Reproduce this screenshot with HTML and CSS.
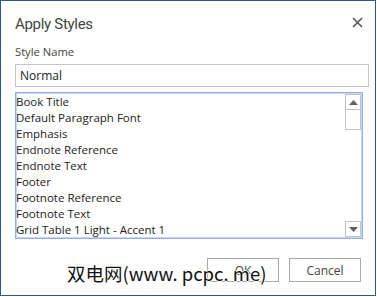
FILE: index.html
```html
<!DOCTYPE html>
<html lang="en">
<head>
  <meta charset="UTF-8">
  <title>Apply Styles</title>
  <link rel="stylesheet" href="styles.css">
</head>
<body>
  <div class="dialog">
    <div class="header">
      <h1>Apply Styles</h1>
      <button class="close" aria-label="Close">
        <svg width="11" height="11" viewBox="0 0 11 11"><path d="M1 1L10 10M10 1L1 10" stroke="#555" stroke-width="1.6"/></svg>
      </button>
    </div>

    <label for="styleName">Style Name</label>
    <input type="text" id="styleName" value="Normal">

    <div class="list">
      <ul class="items">
        <li>Book Title</li>
        <li>Default Paragraph Font</li>
        <li>Emphasis</li>
        <li>Endnote Reference</li>
        <li>Endnote Text</li>
        <li>Footer</li>
        <li>Footnote Reference</li>
        <li>Footnote Text</li>
        <li>Grid Table 1 Light - Accent 1</li>
      </ul>
      <div class="scrollbar">
        <div class="arrow up"><svg width="9" height="5" viewBox="0 0 9 5"><path d="M4.5 0L9 5H0Z" fill="#606060"/></svg></div>
        <div class="thumb"></div>
        <div class="track"></div>
        <div class="arrow down"><svg width="9" height="5" viewBox="0 0 9 5"><path d="M0 0H9L4.5 5Z" fill="#606060"/></svg></div>
      </div>
    </div>

    <div class="actions">
      <button class="btn">OK</button>
      <button class="btn">Cancel</button>
      <span class="watermark">双电网(www. pcpc. me)</span>
    </div>
  </div>
</body>
</html>
```

FILE: styles.css
```css
* {
  box-sizing: border-box;
}
body {
  margin: 0;
  background-color: white;
  font-family: 'Open Sans', 'Noto Sans', sans-serif;
  color: #444;
}
.dialog {
  width: 376px;
  height: 296px;
  border: 1px solid #2b579a;
  padding: 0 14px 0 14px;
  position: relative;
}
.header {
  display: flex;
  justify-content: space-between;
  align-items: center;
  height: 43px;
}
h1 {
  margin: 0;
  font-family: 'Roboto', 'Open Sans', sans-serif;
  font-size: 15px;
  font-weight: 400;
  letter-spacing: -0.3px;
  color: #444;
  padding-top: 2px;
}
.close {
  border: none;
  background: none;
  padding: 0;
  margin-right: -2px;
  display: flex;
}
label {
  display: block;
  font-size: 11.2px;
  line-height: 16px;
  color: #444;
  margin-bottom: 4px;
}
input {
  display: block;
  width: 354px;
  height: 23px;
  border: 1px solid #c6c6c6;
  padding: 0 4px;
  font-family: inherit;
  font-size: 12px;
  color: #222;
  margin: 0 0 5px;
  outline: none;
}
.list {
  display: flex;
  width: 348px;
  height: 147px;
  border: 1px solid #8fb0e4;
  box-shadow: inset 0 0 0 1px #c7d8f3;
  padding: 1px 1px 1px 0;
}
.items {
  flex: 1;
  list-style: none;
  margin: 0;
  padding: 0;
}
.items li {
  height: 16px;
  line-height: 16px;
  font-size: 11.5px;
  color: #222;
  white-space: nowrap;
}
.scrollbar {
  width: 16px;
  display: flex;
  flex-direction: column;
}
.arrow {
  height: 16px;
  border: 1px solid #c4c4c4;
  display: flex;
  align-items: center;
  justify-content: center;
  background-color: white;
}
.thumb {
  height: 20px;
  border: 1px solid #c4c4c4;
  border-top: none;
}
.track {
  flex: 1;
}
.actions {
  display: flex;
  justify-content: flex-end;
  gap: 10px;
  margin-top: 19px;
  position: relative;
}
.btn {
  width: 72px;
  height: 24px;
  border: 1px solid #ababab;
  background-color: white;
  font-family: inherit;
  font-size: 12px;
  color: #444;
  padding: 0;
}
.watermark {
  position: absolute;
  left: 52px;
  top: 3px;
  font-family: 'Noto Sans CJK SC', sans-serif;
  font-size: 18.5px;
  line-height: 24px;
  color: #111;
  text-shadow: 1px 0 0 #fff, -1px 0 0 #fff, 0 1px 0 #fff, 0 -1px 0 #fff;
}
```
